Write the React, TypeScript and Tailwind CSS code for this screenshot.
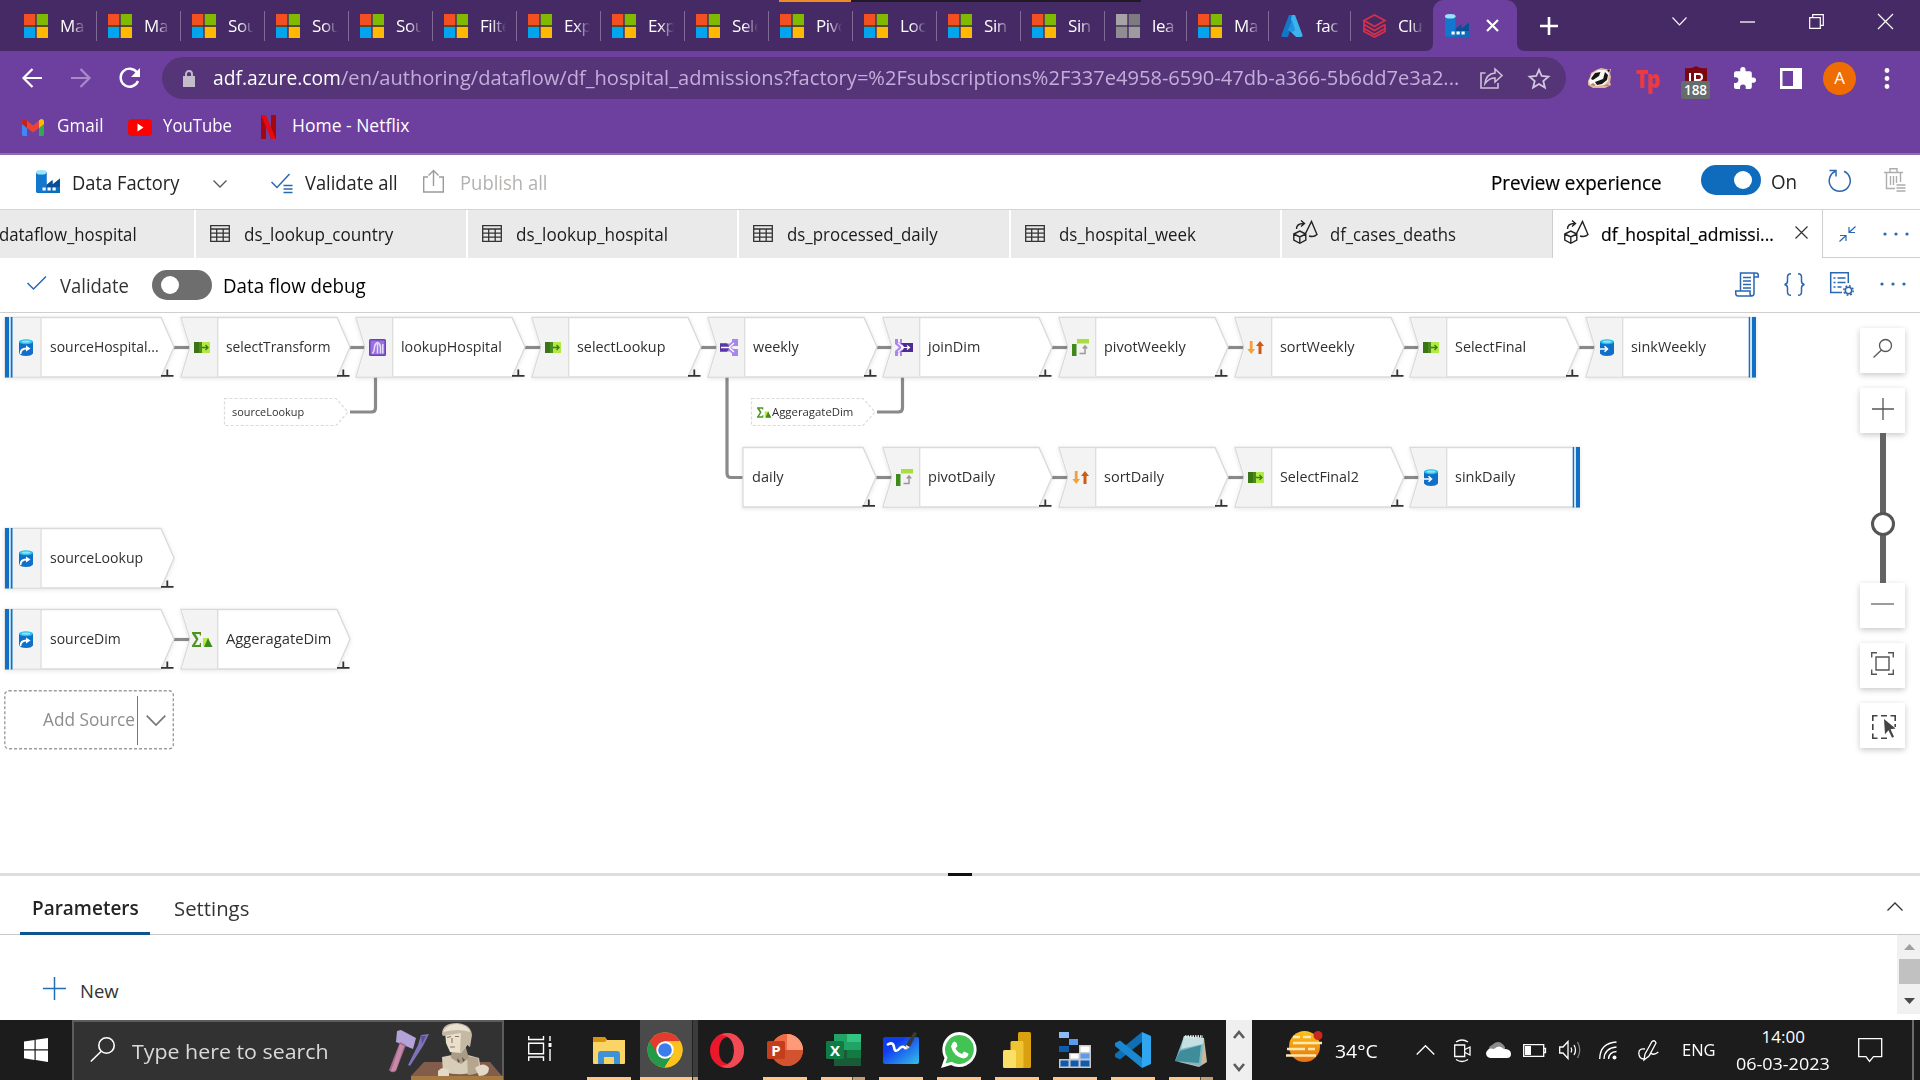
import { useLayoutEffect, useRef, useState, type ReactNode } from "react";

/* Text run squeezed or stretched to an exact advance width. */
function T({ w, className = "", children }: { w: number; className?: string; children: ReactNode }) {
  const ref = useRef<HTMLSpanElement>(null);
  const [k, setK] = useState(1);
  useLayoutEffect(() => {
    if (ref.current) setK(w / ref.current.offsetWidth);
  }, [w]);
  return (
    <span className={"block shrink-0 whitespace-nowrap " + className} style={{ width: w }}>
      <span ref={ref} className="inline-block origin-left" style={{ transform: `scaleX(${k})` }}>
        {children}
      </span>
    </span>
  );
}

function Svg({ w, h, vb, className = "", children }: { w: number; h: number; vb?: string; className?: string; children: ReactNode }) {
  return (
    <svg width={w} height={h} viewBox={vb ?? `0 0 ${w} ${h}`} className={"block shrink-0 overflow-visible " + className} fill="none">
      {children}
    </svg>
  );
}

/* ---------- browser chrome ---------- */

function MsLogo({ grey }: { grey?: boolean }) {
  const c = grey ? ["#a5a3a6", "#7d7b7e", "#8f8d90", "#9d9b9e"] : ["#f25022", "#7fba00", "#00a4ef", "#ffb900"];
  return (
    <Svg w={24} h={24}>
      <path d="M0 0h24v24H0z" fill={grey ? "#5a4d68" : "#5c4a28"} />
      <path d="M11 0h2v24h-2z" fill="#462a65" />
      <path d="M0 0h11.3v11H0z" fill={c[0]} />
      <path d="M12.7 0H24v11H12.7z" fill={c[1]} />
      <path d="M0 13h11.3v11H0z" fill={c[2]} />
      <path d="M12.7 13H24v11H12.7z" fill={c[3]} />
    </Svg>
  );
}

function FactoryIcon({ w = 24, h = 24 }: { w?: number; h?: number }) {
  return (
    <Svg w={w} h={h} vb="0 0 24 24">
      <path d="M0 2h10.500v13l6-5v4.500l7.500-6V23H1.500L0 22z" fill="#0f6cbd" />
      <path d="M10.500 15l6-5v4.500l7.500-6V17H10.500z" fill="#0a4f96" />
      <path d="M0 2h10.500v20.500H1L0 22z" fill="#1277cf" />
      <ellipse cx="5.250" cy="2.300" rx="5.250" ry="2.300" fill="#9be4f8" />
      <path d="M6.500 17.500h3.200v3H6.500zM11.500 17.500h3.200v3h-3.200zM16.500 17.500h3.200v3h-3.200z" fill="#fff" />
    </Svg>
  );
}

function AzureIcon() {
  return (
    <Svg w={22} h={22}>
      <path d="M8 0h6L7 22H1.500Q0 22 .5 20z" fill="#1377c8" />
      <path d="M14 0l7.500 20q.4 2-1.500 2h-5L7 14h6L10 4l1-4z" fill="#3cb3ee" />
      <path d="M11 5l-3.500 9 4 3 2.500-2z" fill="#2390dd" />
    </Svg>
  );
}

function DatabricksIcon() {
  return (
    <Svg w={23} h={24}>
      <path
        d="M1 6.500L11.500 1 22 6.500 11.500 12.500zM1 6.500v4l10.500 6 10.500-6M1 10.500v4l10.500 6 10.500-6v-4M1 14.500v3l10.500 5.500L22 17.500v-3"
        stroke="#d6304a"
        strokeWidth="1.700"
      />
    </Svg>
  );
}

const msTabs = ["Ma", "Ma", "Sou", "Sou", "Sou", "Filte", "Exp", "Exp", "Sele", "Pivo", "Loc", "Sin", "Sin"];

function BrowserTab({ icon, label, narrow, last }: { icon: ReactNode; label: string; narrow?: boolean; last?: boolean }) {
  return (
    <div
      className={
        (narrow ? "w-[82px]" : "w-[84px]") + (last ? "" : " border-r") + " flex h-[30px] shrink-0 items-center border-[#7f6a96] pl-[11px]"
      }
    >
      <div className="flex w-6 justify-center">{icon}</div>
      <div className="ml-3 w-[26px] overflow-hidden whitespace-nowrap text-[17px] leading-[26px] tracking-[-0.4px] text-white [mask-image:linear-gradient(to_right,black_45%,transparent)]">
        {label}
      </div>
    </div>
  );
}

function TabStrip() {
  return (
    <div className="relative flex h-[51px] shrink-0 items-center bg-[#462a65] pl-[13px]">
      <div className="absolute left-[779px] top-0 flex h-[2px] w-[362px] bg-[#1f1a26]">
        <div className="w-[72px] bg-[#f08a24]" />
      </div>
      {msTabs.map((t, i) => (
        <BrowserTab key={i} icon={<MsLogo />} label={t} />
      ))}
      <BrowserTab icon={<MsLogo grey />} label="lea" narrow />
      <BrowserTab icon={<MsLogo />} label="Ma" narrow />
      <BrowserTab icon={<AzureIcon />} label="fac" narrow />
      <BrowserTab icon={<DatabricksIcon />} label="Clus" narrow last />
      <div className="relative flex h-[51px] w-[84px] shrink-0 items-center rounded-t-[11px] bg-[#6d409f] pl-3">
        <Svg w={8} h={8} className="absolute -left-2 bottom-0">
          <path d="M8 0v8H0q8 0 8-8z" fill="#6d409f" />
        </Svg>
        <Svg w={8} h={8} className="absolute -right-2 bottom-0">
          <path d="M0 0v8h8Q0 8 0 0z" fill="#6d409f" />
        </Svg>
        <FactoryIcon />
        <Svg w={13} h={13} className="ml-[17px]">
          <path d="M1 1l11 11M12 1L1 12" stroke="#fff" strokeWidth="2.200" />
        </Svg>
      </div>
      <Svg w={18} h={18} className="ml-[23px]">
        <path d="M9 0v18M0 9h18" stroke="#fff" strokeWidth="2.600" />
      </Svg>
      <Svg w={15} h={9} className="mb-2 ml-[114px]">
        <path d="M.5.5l7 7.500 7-7.500" stroke="#fff" strokeWidth="1.100" />
      </Svg>
      <Svg w={15} h={2} className="mb-2 ml-[53px]">
        <path d="M0 1h15" stroke="#fff" strokeWidth="1.300" />
      </Svg>
      <Svg w={15} h={15} className="mb-2 ml-[54px]">
        <path d="M.7 3.700h10.600v10.600H.7zM3.700 3.500V.7h10.600v10.600h-2.600" stroke="#fff" strokeWidth="1.200" />
      </Svg>
      <Svg w={15} h={15} className="mb-2 ml-[54px]">
        <path d="M0 0l15 15M15 0L0 15" stroke="#fff" strokeWidth="1.200" />
      </Svg>
    </div>
  );
}

function AddressBar() {
  return (
    <div className="flex h-[54px] items-center pl-[22px]">
      <Svg w={20} h={20}>
        <path d="M20 10H2M10.500 1L1.500 10l9 9" stroke="#fff" strokeWidth="2.200" />
      </Svg>
      <Svg w={20} h={20} className="ml-[29px]">
        <path d="M0 10h18M9.500 1l9 9-9 9" stroke="#a98bc9" strokeWidth="2.200" />
      </Svg>
      <Svg w={21} h={20} className="ml-7">
        <path d="M18 4.500A9 9 0 1 0 19 13" stroke="#fff" strokeWidth="2.400" />
        <path d="M21 0v9h-9z" fill="#fff" />
      </Svg>
      <div className="ml-[22px] flex h-[42px] w-[1404px] shrink-0 items-center rounded-full bg-[#553577] pl-[21px] text-[20px]">
        <Svg w={12} h={17} className="mr-[18px]">
          <path d="M0 6h12v11H0z" fill="#c3bccb" />
          <path d="M3 7V4a3 3 0 0 1 6 0v3" stroke="#c3bccb" strokeWidth="1.900" />
        </Svg>
        <T w={128} className="text-white">adf.azure.com</T>
        <T w={1118} className="text-[#c4addb]">
          /en/authoring/dataflow/df_hospital_admissions?factory=%2Fsubscriptions%2F337e4958-6590-47db-a366-5b6dd7e3a2...
        </T>
        <Svg w={23} h={21} className="ml-[21px]">
          <path d="M5.500 5H1v15h17v-5" stroke="#cdc2d8" strokeWidth="1.600" />
          <path d="M15 1l7 6.500-7 6.500v-4q-6 0-10 5.500Q6 6 15 5z" stroke="#cdc2d8" strokeWidth="1.600" />
        </Svg>
        <Svg w={22} h={21} className="ml-[25px]">
          <path d="M11 1.800l2.700 6.200 6.700.6-5.100 4.400 1.600 6.600L11 16.100l-5.900 3.500 1.600-6.600L1.600 8.600 8.300 8z" stroke="#d3c6e0" strokeWidth="1.800" />
        </Svg>
      </div>
      <Svg w={25} h={20} className="ml-[21px]">
        <path d="M1 13l2-4 1-4 5-3 5-2 5 1 5 0-1 4 1 4-1 5 1 3-6 3H6l-5-3z" fill="#e3b79c" />
        <path d="M2 13l3-7 6-4 7 0 4 3-1 8-4 4-9 1-5-1z" fill="#fbf8f4" />
        <path d="M2 13.500l2-2.500 2 1 6-4 1.500-4L8 5l-3 4-1 2zM8 14l8-3 2-7 3 3-1 5-5 4-5 1zM20 1.500l3 0-1 3z" fill="#161616" />
        <path d="M14.500 10l2-1-.5 1.500z" fill="#eee" />
        <path d="M3 17l3-2 3 2-2 1zM16 18l5-2 1 2z" fill="#b98668" />
      </Svg>
      <div className="ml-[24px] w-6 shrink-0 text-[25px] font-extrabold leading-[24px] tracking-[-2px] text-[#ee3a3f]">
        <T w={23}>Tp</T>
      </div>
      <div className="relative ml-[21px] h-[42px] w-[29px] shrink-0">
        <Svg w={22} h={20} className="absolute left-[4px] top-[9px]">
          <path d="M0 2q7 1 11-2 4 3 11 2v18H0z" fill="#7d0710" />
          <path d="M5 7v9M10 16V8h4a3 3 0 0 1 0 6h-3" stroke="#fff" strokeWidth="2" />
        </Svg>
        <div className="absolute left-0 top-6 flex h-[18px] w-[29px] items-center justify-center rounded-[2px] bg-[#666b6c] text-[13.500px] font-semibold text-white">
          188
        </div>
      </div>
      <Svg w={22} h={22} vb="2 1 21 21" className="ml-6">
        <path d="M20.500 11H19V7a2 2 0 0 0-2-2h-4V3.500a2.500 2.500 0 0 0-5 0V5H4a2 2 0 0 0-2 2v3.800h1.500a2.700 2.700 0 0 1 0 5.400H2V20a2 2 0 0 0 2 2h3.800v-1.500a2.700 2.700 0 0 1 5.400 0V22H17a2 2 0 0 0 2-2v-4h1.500a2.500 2.500 0 0 0 0-5z" fill="#fff" />
      </Svg>
      <Svg w={22} h={21} className="ml-[24px]">
        <path d="M0 0h22v21H0zM2.500 3v15H13V3z" fill="#fff" fillRule="evenodd" />
      </Svg>
      <div className="ml-[21px] flex size-[33px] shrink-0 items-center justify-center rounded-full bg-[#ef6c00] text-[17px] text-white">A</div>
      <Svg w={6} h={21} className="ml-7">
        <circle cx="3" cy="2.500" r="2.400" fill="#fff" />
        <circle cx="3" cy="10.500" r="2.400" fill="#fff" />
        <circle cx="3" cy="18.500" r="2.400" fill="#fff" />
      </Svg>
    </div>
  );
}

function Bookmarks() {
  return (
    <div className="flex h-10 items-center pl-[22px] text-[17.500px] text-white">
      <Svg w={22} h={17} className="mt-1">
        <path d="M0 3v12.500Q0 17 1.500 17H5V7z" fill="#4285f4" />
        <path d="M22 3v12.500q0 1.500-1.500 1.500H17V7z" fill="#34a853" />
        <path d="M0 3q0-3 3-3l8 6.500L19 0l-2 9-6 4.500L5 9z" fill="#ea4335" />
        <path d="M0 3q0-3 3-3l2 1.500V9L0 5z" fill="#c5221f" />
        <path d="M22 3q0-3-3-3l-2 1.500V9l5-4z" fill="#fbbc04" />
      </Svg>
      <T w={46} className="ml-[13px]">Gmail</T>
      <Svg w={24} h={17} className="ml-[25px] mt-1">
        <rect width="24" height="17" rx="4" fill="#fe0000" />
        <path d="M9.500 4.500l6 4-6 4z" fill="#fff" />
      </Svg>
      <T w={69} className="ml-[11px]">YouTube</T>
      <Svg w={15} h={24} className="ml-[29px] mt-1">
        <path d="M0 0h5v24H0zM10 0h5v24h-5z" fill="#a30710" />
        <path d="M0 0h5l10 24h-5z" fill="#e50914" />
      </Svg>
      <T w={117} className="ml-4">Home - Netflix</T>
    </div>
  );
}

/* ---------- Data Factory header ---------- */

const blue = "#2b66b1";

function Toggle({ on }: { on?: boolean }) {
  return (
    <div className={(on ? "justify-end bg-[#0f6cbd] pr-[9px]" : "justify-start bg-[#6e6e6e] pl-[9px]") + " flex h-[30px] w-[60px] shrink-0 items-center rounded-full"}>
      <div className="size-[18px] rounded-full bg-white" />
    </div>
  );
}

function FactoryBar() {
  return (
    <div className="flex h-[55px] shrink-0 items-center border-b border-[#d4d4d4] pl-9 text-[19.500px] text-[#242424]">
      <FactoryIcon />
      <T w={108} className="ml-3 mt-px">Data Factory</T>
      <Svg w={14} h={8} className="ml-[33px] mt-1">
        <path d="M.5.500l6.500 6.500 6.500-6.500" stroke="#555" strokeWidth="1.300" />
      </Svg>
      <Svg w={22} h={21} className="ml-11 mt-0.5">
        <path d="M.5 9l5.500 5.500L18.500 1" stroke={blue} strokeWidth="1.500" />
        <path d="M12.500 12.500h9M12.500 16h9M12.500 19.500h9" stroke={blue} strokeWidth="1.500" />
      </Svg>
      <T w={93} className="ml-[12px] mt-0.5">Validate all</T>
      <Svg w={21} h={24} className="-mt-0.5 ml-[25px]">
        <path d="M5 8H.7v15h19.600V8H16M10.500 17V1.500M5.500 6.500l5-5 5 5" stroke="#9b9b9b" strokeWidth="1.400" />
      </Svg>
      <T w={87} className="ml-4 mt-0.5 text-[#b4b2b0]">Publish all</T>
      <T w={171} className="ml-[944px] mt-px text-black [-webkit-text-stroke:0.200px_black]">Preview experience</T>
      <div className="-mt-1 ml-[39px]">
        <Toggle on />
      </div>
      <T w={26} className="ml-[10px]">On</T>
      <Svg w={24} h={24} className="-mt-1 ml-[31px]">
        <path d="M7.500 3.200A10.500 10.500 0 1 0 16 3.200" stroke={blue} strokeWidth="1.500" />
        <path d="M1.500 2.500h6.500v6" stroke={blue} strokeWidth="1.500" />
      </Svg>
      <Svg w={22} h={24} className="-mt-1 ml-8">
        <path d="M0 4.500h19M6 4V.8h7V4M2.500 4.500V20.500H11M16.500 4.500V14M6.500 8v9M9.500 8v9M12.500 8v7M12.500 17h9M12.500 20h9M12.500 23h9" stroke="#adadad" strokeWidth="1.400" />
      </Svg>
    </div>
  );
}

function TableIcon() {
  return (
    <Svg w={20} h={17}>
      <path d="M.7.7h18.600v15.600H.7zM.7 4h18.600M.7 8.200h18.600M.7 12.200h18.600M6.700 4v12.300M13.200 4v12.300" stroke="#333" strokeWidth="1.300" />
    </Svg>
  );
}

function FlowIcon() {
  return (
    <Svg w={25} h={24}>
      <path d="M.8 14l6-3 6 3v6l-6 3.300-6-3.300zM.8 14l6 3 6-3M6.800 17v6" stroke="#222" strokeWidth="1.400" />
      <path d="M12 14.500L18.500 1.500l5.500 13q-3 3-8 1.500" stroke="#222" strokeWidth="1.400" />
      <path d="M3.500 9q0-5.500 7-5.500M8 .5l3.500 3L8 6.500" stroke="#222" strokeWidth="1.400" />
    </Svg>
  );
}

const docTabs: { label: string; w: number; flow?: boolean }[] = [
  { label: "ds_lookup_country", w: 149 },
  { label: "ds_lookup_hospital", w: 152 },
  { label: "ds_processed_daily", w: 151 },
  { label: "ds_hospital_week", w: 137 },
  { label: "df_cases_deaths", w: 126, flow: true },
];

function Dots() {
  return (
    <Svg w={26} h={4}>
      <circle cx="2" cy="2" r="1.600" fill={blue} />
      <circle cx="13" cy="2" r="1.600" fill={blue} />
      <circle cx="24" cy="2" r="1.600" fill={blue} />
    </Svg>
  );
}

function DocTabs() {
  return (
    <div className="flex h-12 shrink-0 text-[18px] text-[#1b1b1b]">
      <div className="flex w-[194px] shrink-0 items-center bg-[#eaeaea]">
        <T w={138} className="-ml-px">dataflow_hospital</T>
      </div>
      {docTabs.map((t) => (
        <div key={t.label} className="flex w-[271.500px] shrink-0 items-center border-l-2 border-white bg-[#eaeaea]">
          <div className={t.flow ? "-mt-1 ml-[11px]" : "-mt-0.5 ml-[14px]"}>{t.flow ? <FlowIcon /> : <TableIcon />}</div>
          <T w={t.w} className={t.flow ? "ml-3" : "ml-[14px]"}>{t.label}</T>
        </div>
      ))}
      <div className="flex w-[271.500px] shrink-0 items-center border-x border-[#cfcfcf]">
        <div className="-mt-1 ml-[11px]">
          <FlowIcon />
        </div>
        <T w={173} className="ml-3 text-black [-webkit-text-stroke:0.200px_black]">df_hospital_admissi...</T>
        <Svg w={13} h={13} className="-mt-1 ml-[21px]">
          <path d="M.5.500l12 12M12.500.500l-12 12" stroke="#333" strokeWidth="1.200" />
        </Svg>
      </div>
      <div className="flex grow items-center border-b border-[#cfcfcf] pl-4">
        <Svg w={17} h={16} className="mr-[27px]">
          <path d="M16.500.500L10 6.500M10 1v5.500h6M.500 15.500l6.500-6M1 9.500h6V15" stroke={blue} strokeWidth="1.200" />
        </Svg>
        <Dots />
      </div>
    </div>
  );
}

function FlowToolbar() {
  return (
    <div className="flex h-[55px] shrink-0 items-center border-b border-[#cfcfcf] pl-[27px] text-[19.500px] text-[#333]">
      <Svg w={20} h={14} className="-mt-1">
        <path d="M.5 7l6 6L19 .5" stroke={blue} strokeWidth="1.500" />
      </Svg>
      <T w={69} className="ml-[13px] mt-0.5">Validate</T>
      <div className="ml-[23px]">
        <Toggle />
      </div>
      <T w={143} className="ml-[11px] mt-0.5 text-black">Data flow debug</T>
      <Svg w={24} h={25} className="-mt-0.5 ml-[1369px]">
        <path d="M5.500 19V1H21q2.300 0 2.300 2.500V5H19M19 1.500V21q0 3-2.500 3H3Q.7 24 .7 21v-2H15v2q0 3 2 3" stroke={blue} strokeWidth="1.500" />
        <path d="M8 5.500h8M8 9h8M8 12.500h8M8 16h8" stroke={blue} strokeWidth="1.500" />
      </Svg>
      <Svg w={21} h={23} className="-mt-0.5 ml-[25px]">
        <path d="M7 .7Q3.500.7 3.500 4v4q0 3-3 3.500 3 .5 3 3.500v4q0 3.300 3.500 3.300M14 .7q3.500 0 3.500 3.300v4q0 3 3 3.500-3 .5-3 3.500v4q0 3.300-3.500 3.300" stroke={blue} strokeWidth="1.500" />
      </Svg>
      <Svg w={24} h={24} className="-mt-0.5 ml-[25px]">
        <path d="M12 20.500H.700V.700h17.600V11M3.500 6h2M7.500 6h8M3.500 10.500h2M7.500 10.500h8M3.500 15h2M7.500 15h4" stroke={blue} strokeWidth="1.500" />
        <circle cx="18.500" cy="18.500" r="3.200" stroke={blue} strokeWidth="1.500" />
        <circle cx="18.500" cy="18.500" r="4.700" stroke={blue} strokeWidth="1.500" strokeDasharray="1.800 1.890" />
      </Svg>
      <div className="-mt-0.5 ml-[26px]">
        <Dots />
      </div>
    </div>
  );
}

/* ---------- data flow canvas ---------- */

type Kind = "source" | "select" | "lookup" | "split" | "join" | "pivot" | "sort" | "sink" | "agg";

function KindIcon({ kind }: { kind: Kind }) {
  switch (kind) {
    case "source":
    case "sink":
      return (
        <Svg w={14} h={17}>
          <path d="M0 2.500h14v12q-2 2.500-7 2.500t-7-2.500z" fill="#0f6fc9" />
          <ellipse cx="7" cy="2.800" rx="7" ry="2.500" fill="#2cc0ea" />
          <ellipse cx="7" cy="2.600" rx="4.500" ry="1.200" fill="#8ae6fb" />
          {kind === "source" ? (
            <>
              <path d="M1.500 15q0-5.500 6-5.500" stroke="#fff" strokeWidth="1.800" />
              <path d="M7 6.500L11.500 9.500 7 12.500z" fill="#fff" />
            </>
          ) : (
            <path d="M0 10h7M4.500 7.200l3 2.800-3 2.800" stroke="#fff" strokeWidth="1.500" />
          )}
        </Svg>
      );
    case "select":
      return (
        <Svg w={16} h={11}>
          <path d="M0 0h9v11H0z" fill="#4a8b1d" />
          <path d="M0 0h5v11H0z" fill="#3a7414" />
          <path d="M8 0h8v11H8z" fill="#b2ea45" />
          <path d="M8 5.500h6M11.500 3L14 5.500 11.500 8" stroke="#3f7d14" strokeWidth="1.400" />
        </Svg>
      );
    case "lookup":
      return (
        <Svg w={17} h={17}>
          <rect width="17" height="17" rx="1.500" fill="#6a42b8" />
          <rect x="1.500" y="1.500" width="14" height="14" fill="#9a70e2" />
          <path d="M3.500 14.500Q5.500 12 5.500 8.500q0-3.500 3-5 3 1.500 3 5v6" stroke="#e8dcfb" strokeWidth="1.500" />
          <path d="M8.500 14.500V5M13.800 14.500V5" stroke="#e8dcfb" strokeWidth="1.500" />
        </Svg>
      );
    case "split":
      return (
        <Svg w={18} h={17}>
          <path d="M0 4.500h7l4 4-4 4H0z" fill="#4c2c91" />
          <path d="M6 4.500h4l2-2V0h6v7h-4.500l-2.500 1.500 2.500 1.500H18v7h-6v-2.500l-2-2H6z" fill="#a986ec" />
          <path d="M0 4.500h7l3 4-3 4H0z" fill="#5a35a3" />
          <path d="M1 8.500h8l5-4.500M9 8.500l5 4.500" stroke="#fff" strokeWidth="1.300" />
        </Svg>
      );
    case "join":
      return (
        <Svg w={18} h={17}>
          <path d="M0 0h3v3l4 2-1 3.500L7 12l-4 2v3H0v-5l4-3.500L0 5z" fill="#a986ec" />
          <path d="M6 0v5M6 17v-5" stroke="#a986ec" strokeWidth="2" />
          <path d="M6 4h12v9H6l3.500-4.500z" fill="#4c2c91" />
          <path d="M3 4l5 4.500L3 13M8 8.500h6M12 6.500l2.500 2-2.500 2" stroke="#fff" strokeWidth="1.200" />
        </Svg>
      );
    case "pivot":
      return (
        <Svg w={17} h={17}>
          <path d="M5 0h12v4.500H5z" fill="#a8df3e" />
          <path d="M0 5h4.500v12H0z" fill="#3f8a1c" />
          <path d="M7.500 14.500H13V7.500M10.800 9.500L13 7l2.200 2.500" stroke="#999" strokeWidth="1.500" />
        </Svg>
      );
    case "sort":
      return (
        <Svg w={17} h={13}>
          <path d="M2.800 0h2.800v8H8l-3.800 5L.4 8h2.400z" fill="#f2a13a" />
          <path d="M11.500 13h3V5H17L13 0 9 5h2.500z" fill="#cf5a11" />
        </Svg>
      );
    case "agg":
      return (
        <Svg w={20} h={15}>
          <path d="M0 0h9v3.500H8L7.500 2H3.500l3 5-3.500 6h4.500L8 11h1v4H0v-1.500L4 7.500 0 1.500z" fill="#4f9422" />
          <path d="M11 6h6v8h-6z" fill="#b2ea45" />
          <path d="M16 6l4.500 9H12z" fill="#3f8a1c" />
        </Svg>
      );
  }
}

function FlowNode({ x, y, label, w, kind }: { x: number; y: number; label: string; w: number; kind?: Kind }) {
  const source = kind === "source";
  const sink = kind === "sink";
  const bare = !kind;
  const right = bare ? 119.5 : 156;
  const body = sink
    ? "M0 .5H169V60H0L9 30z"
    : source
      ? "M0 .5H156L169 30 156 60H0z"
      : bare
        ? "M0 .5H120L133 30 120 60H0z"
        : "M0 .5H156L169 30 156 60H0L9 30z";
  const tx = source ? 45 : bare ? 9 : 45;
  return (
    <div className="absolute h-[60px] w-[170px]" style={{ left: x, top: y }}>
      <Svg w={176} h={60} className="absolute left-0 top-0 drop-shadow-[0_1px_2px_rgba(0,0,0,0.1)]">
        <path d={body} fill="#fff" stroke="#dadada" strokeWidth="1.300" />
        {!bare && <path d={source ? "M7 1h28.500v58.500H7z" : "M.800 1h35.700v58.500H.800L10 30z"} fill="#f3f3f3" />}
        {!bare && <path d={source ? "M36 1v58.500" : "M36.700 1v58.500"} stroke="#dcdcdc" strokeWidth="1.300" />}
        {source && <path d="M0 0h4v60.500H0zM5.500 0h2v60.500h-2z" fill="#1170c4" />}
        {source && <path d="M4 0h1.500v60.500H4z" fill="#cfe6f8" />}
        {sink && <path d="M162.700 0h1.600v60.500h-1.600zM166 0h4v60.500h-4z" fill="#1170c4" />}
        {sink && <path d="M164.300 0h1.700v60.500h-1.700z" fill="#cfe6f8" />}
        {!sink && <path d={`M${right} 58.800h12.500M${right + 6.3} 58V52.500`} stroke="#333" strokeWidth="1.800" />}
      </Svg>
      {kind && (
        <div className="absolute left-[9px] top-0 flex h-[60px] w-6 items-center justify-center">
          <KindIcon kind={kind} />
        </div>
      )}
      <div className="absolute top-0 flex h-[59px] items-center text-[15px] font-medium text-[#303030]" style={{ left: tx }}>
        <T w={w}>{label}</T>
      </div>
    </div>
  );
}

function RefNode({ x, y, label, w, agg }: { x: number; y: number; label: string; w: number; agg?: boolean }) {
  return (
    <div className="absolute flex h-7 w-[126px] items-center text-[11.500px] font-medium text-[#303030]" style={{ left: x, top: y }}>
      <Svg w={126} h={28} className="absolute left-0 top-0">
        <path d="M.500.500H112L124 14 112 27.500H.500z" fill="#fff" stroke="#dadada" strokeWidth="1.200" strokeDasharray="3 2" />
      </Svg>
      {agg && (
        <Svg w={14} h={11} vb="0 0 20 15" className="relative ml-[6px] mr-px">
          <path d="M0 0h9v3.500H8L7.500 2H3.500l3 5-3.500 6h4.500L8 11h1v4H0v-1.500L4 7.500 0 1.500z" fill="#4f9422" />
          <path d="M11 6h6v8h-6z" fill="#b2ea45" />
          <path d="M16 6l4.500 9H12z" fill="#3f8a1c" />
        </Svg>
      )}
      <T w={w} className={agg ? "relative -mt-px" : "relative -mt-px ml-[8px]"}>{label}</T>
    </div>
  );
}

const P = 175.7;
const nodes: { x: number; y: number; label: string; w: number; kind?: Kind }[] = [
  { x: 5, y: 4, label: "sourceHospital...", w: 109, kind: "source" },
  { x: 180.5, y: 4, label: "selectTransform", w: 104, kind: "select" },
  { x: 180.5 + P, y: 4, label: "lookupHospital", w: 101, kind: "lookup" },
  { x: 180.5 + 2 * P, y: 4, label: "selectLookup", w: 88, kind: "select" },
  { x: 180.5 + 3 * P, y: 4, label: "weekly", w: 46, kind: "split" },
  { x: 180.5 + 4 * P, y: 4, label: "joinDim", w: 52, kind: "join" },
  { x: 180.5 + 5 * P, y: 4, label: "pivotWeekly", w: 82, kind: "pivot" },
  { x: 180.5 + 6 * P, y: 4, label: "sortWeekly", w: 75, kind: "sort" },
  { x: 180.5 + 7 * P, y: 4, label: "SelectFinal", w: 71, kind: "select" },
  { x: 180.5 + 8 * P, y: 4, label: "sinkWeekly", w: 75, kind: "sink" },
  { x: 743, y: 134, label: "daily", w: 32 },
  { x: 180.5 + 4 * P, y: 134, label: "pivotDaily", w: 67, kind: "pivot" },
  { x: 180.5 + 5 * P, y: 134, label: "sortDaily", w: 60, kind: "sort" },
  { x: 180.5 + 6 * P, y: 134, label: "SelectFinal2", w: 79, kind: "select" },
  { x: 180.5 + 7 * P, y: 134, label: "sinkDaily", w: 60, kind: "sink" },
  { x: 5, y: 215, label: "sourceLookup", w: 93, kind: "source" },
  { x: 5, y: 296, label: "sourceDim", w: 71, kind: "source" },
  { x: 180.5, y: 296, label: "AggeragateDim", w: 105, kind: "agg" },
];

const links = [
  ...Array.from({ length: 9 }, (_, i) => `M${173.5 + i * P} 34.500h17`),
  ...Array.from({ length: 4 }, (_, i) => `M${173.5 + (i + 4) * P} 164.500h17`),
  "M173.500 326.500h17",
  "M375.500 64v31q0 4-4 4H350",
  "M902.500 64v31q0 4-4 4H877",
  "M727 64v96q0 4.500 4 4.500h12",
];

function ToolButton({ children, className = "" }: { children: ReactNode; className?: string }) {
  return (
    <div className={"flex size-[45px] shrink-0 items-center justify-center bg-white shadow-[0_2px_6px_rgba(0,0,0,0.220)] " + className}>{children}</div>
  );
}

function Canvas() {
  return (
    <div className="relative h-[560px] shrink-0 overflow-hidden bg-white">
      <Svg w={1800} h={560} className="absolute left-0 top-0">
        {links.map((d, i) => (
          <path key={i} d={d} stroke="#8a8a8a" strokeWidth="3.200" />
        ))}
      </Svg>
      {nodes.map((n, i) => (
        <FlowNode key={i} {...n} />
      ))}
      <RefNode x={224} y={85} label="sourceLookup" w={72} />
      <RefNode x={751} y={85} label="AggeragateDim" w={81} agg />
      <div className="absolute left-[4px] top-[377px] flex h-[60px] w-[170px] items-center text-[18px] text-[#8d8d8d]">
        <Svg w={170} h={60} className="absolute left-0 top-0">
          <rect x=".8" y=".8" width="168.500" height="58" rx="4" stroke="#9c9c9c" strokeWidth="1.400" strokeDasharray="3 2" />
        </Svg>
        <T w={92} className="-mt-px ml-[39px]">Add Source</T>
        <div className="ml-[2px] h-[49px] w-px bg-[#777]" />
        <Svg w={20} h={11} className="ml-2 mt-px">
          <path d="M.7.700l9.300 9.300 9.300-9.300" stroke="#777" strokeWidth="1.700" />
        </Svg>
      </div>
      <div className="absolute left-[1860px] top-[15px] flex flex-col items-center">
        <ToolButton>
          <Svg w={19} h={19} className="mb-1">
            <circle cx="12.500" cy="6.500" r="6" stroke="#555" strokeWidth="1.300" />
            <path d="M8.500 11L.5 18.500" stroke="#555" strokeWidth="1.300" />
          </Svg>
        </ToolButton>
        <ToolButton className="mt-[15px]">
          <Svg w={22} h={22} className="mb-1">
            <path d="M11 0v22M0 11h22" stroke="#555" strokeWidth="1.300" />
          </Svg>
        </ToolButton>
        <div className="relative ml-px h-[150px] w-[6px] bg-[#636363]">
          <div className="absolute -left-[9px] top-[79px] size-6 rounded-full border-[3px] border-[#555] bg-white" />
        </div>
        <ToolButton>
          <Svg w={23} h={2} className="mb-1">
            <path d="M0 1h23" stroke="#666" strokeWidth="1.300" />
          </Svg>
        </ToolButton>
        <ToolButton className="mt-[15px]">
          <Svg w={23} h={23} className="mb-1">
            <path d="M5 5h13v13H5zM.700 5.500V.700H6M17 .700h5.300V5.500M.700 17.500v4.800H6M17 22.300h5.300v-4.800" stroke="#555" strokeWidth="1.400" />
          </Svg>
        </ToolButton>
        <ToolButton className="mt-[15px]">
          <Svg w={24} h={24} className="ml-[3px] mt-0.5">
            <path d="M.800 6V.800H5.500M9 .800h6M18.500.800h4.700V6M.800 9v6M.800 18.500v4.700H5.500M9 23.200h6M23.200 9v3" stroke="#444" strokeWidth="1.600" />
            <path d="M12 4l11.500 9.500-5 .8 3.500 7.500-2 .9-3.500-7.500-3.500 4z" fill="#444" />
          </Svg>
        </ToolButton>
      </div>
    </div>
  );
}

/* ---------- bottom panel ---------- */

function Panel() {
  return (
    <div className="h-[147px] shrink-0 bg-white">
      <div className="flex h-[3px] justify-center bg-[#dedede]">
        <div className="h-[3px] w-6 bg-[#111]" />
      </div>
      <div className="flex h-[59px] items-center border-b border-[#c9c9c9] pl-5 text-[19.500px] text-[#333]">
        <div className="flex h-[59px] w-[130px] shrink-0 items-center border-b-[3px] border-[#0f548c] pl-3 pt-[9px] font-semibold text-[#242424]">
          <T w={107}>Parameters</T>
        </div>
        <T w={75} className="ml-6 mt-[7px]">Settings</T>
        <Svg w={16} h={9} className="ml-[1638px] mt-[2px]">
          <path d="M.5 8.500L8 1l7.500 7.500" stroke="#333" strokeWidth="1.300" />
        </Svg>
      </div>
      <div className="flex h-[85px]">
        <div className="flex grow items-start pl-[43px] pt-[42px] text-[18.500px] text-[#333]">
          <Svg w={23} h={23}>
            <path d="M11.500 0v23M0 11.500h23" stroke="#1f6fb8" strokeWidth="1.500" />
          </Svg>
          <T w={39} className="ml-[14px]">New</T>
        </div>
        <div className="flex h-[79px] w-[23px] flex-col items-center bg-[#f1f1f1]">
          <Svg w={11} h={6} className="ml-px mt-[9px]">
            <path d="M0 6L5.500 0 11 6z" fill="#a0a0a0" />
          </Svg>
          <div className="ml-0.5 mt-[9px] h-[25px] w-[21px] bg-[#c1c1c1]" />
          <Svg w={11} h={6} className="ml-px mt-[14px]">
            <path d="M0 0l5.500 6L11 0z" fill="#4a4a4a" />
          </Svg>
        </div>
      </div>
    </div>
  );
}

/* ---------- taskbar ---------- */

function SculptureArt() {
  return (
    <Svg w={116} h={57}>
      <path d="M10 8l4-1 15 8-3 11-17-7z" fill="#b4a3d8" />
      <path d="M13 19l6 3-10 26q-4 3-7-1z" fill="#a8688c" />
      <path d="M17 23L9 47q-3 2-5 1l9-27z" fill="#c58aa8" />
      <path d="M34 12l8-1-6 12L23 43l-2-1 10-20z" fill="#7f72b8" />
      <path d="M34 13l5 0-4 8z" fill="#5c4f98" />
      <path d="M37 39h66l12 14H24z" fill="#835d4c" />
      <path d="M24 53h92v4H24z" fill="#a77a42" />
      <path d="M55 34l10-2h16l11 3 2 13q-18 6-38 1z" fill="#d8cdb9" />
      <path d="M80 33l11 2 2 14q-7 3-12 3z" fill="#b5a78f" />
      <path d="M65 22h13l4 13-8 6-10-6z" fill="#a99b85" />
      <path d="M58 8l21-1 2 14-7 9-11-1-4-9z" fill="#eadfcb" />
      <path d="M74 9l6-1q3 10-1 16l-6 6z" fill="#c6b9a3" />
      <path d="M55 11Q55 0 70 0q14 1 15 12l-2 12q-4-2-5-8l-4-6-18 3z" fill="#c6b9a3" />
      <path d="M56 9Q60 1 70 1q11 1 13 8-11-4-27 0z" fill="#e9e1d1" />
      <path d="M60 14.500l4-1M68 13.500h4M63 24h5M65 15v5" stroke="#85755f" strokeWidth="1.100" />
      <path d="M51 48q5-6 11 0v5H51zM88 45q9-7 14 0 0 8-10 8z" fill="#e3d9c8" />
      <path d="M70 35l3 3-2 2zM75 34l3 3-2 2z" fill="#60523f" />
    </Svg>
  );
}

function TaskApp({ bar, active, className = "", children }: { bar?: "full" | "split"; active?: boolean; className?: string; children: ReactNode }) {
  return (
    <div className={(active ? "bg-[#4a4a4a] " : "") + "relative flex h-[60px] w-[58px] shrink-0 items-center justify-center " + className}>
      {children}
      {bar && (
        <div className={(active ? "inset-x-0" : "inset-x-[7px]") + " absolute bottom-0 flex h-[3px] bg-[#fcc68d]"}>
          {bar === "split" && <div className="ml-auto w-[13px] border-l border-[#5a4a38] bg-[#c69e75]" />}
        </div>
      )}
      {active && <div className="absolute inset-y-0 right-0 w-[6px] border-l border-[#222] bg-[#3c3c3c]" />}
      {active && <div className="absolute bottom-0 right-0 h-[3px] w-[5px] bg-[#c69e75]" />}
    </div>
  );
}

function Taskbar() {
  return (
    <div className="flex h-[60px] shrink-0 items-center bg-[#1c1c1c] text-white">
      <Svg w={24} h={24} className="ml-6">
        <path d="M0 3.500L10.500 2v9.300H0zM11.700 1.800L24 0v11.300H11.700zM0 12.500h10.500v9.400L0 20.300zM11.700 12.500H24V24l-12.300-1.900z" fill="#fff" />
      </Svg>
      <div className="ml-6 flex h-[60px] w-[432px] shrink-0 items-center border-2 border-b-0 border-[#5c5c5c] bg-[#323232]">
        <Svg w={25} h={25} className="-mt-1 ml-4">
          <circle cx="16.500" cy="8.500" r="7.700" stroke="#fff" strokeWidth="1.600" />
          <path d="M11 14.500L.8 24.500" stroke="#fff" strokeWidth="1.600" />
        </Svg>
        <T w={197} className="ml-[17px] text-[20.500px] text-[#dadada]">Type here to search</T>
        <div className="ml-[58px]">
          <SculptureArt />
        </div>
      </div>
      <Svg w={24} h={25} className="-mt-1 ml-6">
        <path d="M.7 0v3.500h14.800V0M.7 7.200h14.800v10.600H.7zM.7 25v-4h14.800v4M22 0v5M22 13v12" stroke="#fff" strokeWidth="1.400" />
        <path d="M20.500 7h3v4h-3z" fill="#fff" />
      </Svg>
      <div className="ml-7 flex">
        <TaskApp bar="full">
          <Svg w={32} h={27}>
            <path d="M0 0h11l3 3h18v23q0 1-1 1H1q-1 0-1-1z" fill="#fbd466" />
            <path d="M0 0h12l2 2.500-2 2.500H0z" fill="#d9930d" />
            <path d="M5 17q0-3 3-3h16q3 0 3 3v10h-6v-7H11v7H5z" fill="#3f92d6" />
          </Svg>
        </TaskApp>
        <TaskApp bar="full" active className="ml-0.5">
          <Svg w={36} h={36} vb="0 0 36 36" className="mr-2">
            <circle cx="18" cy="18" r="17.500" fill="#fcc31e" />
            <path d="M18 18L2.800 9.300A17.500 17.500 0 0 1 33.200 9.300H18z" fill="#e33b2e" />
            <path d="M2.800 9.300A17.500 17.500 0 0 0 17.500 35.500L26 22 18 18z" fill="#229a48" />
            <path d="M2.800 9.300L10.500 22 18 9.300z" fill="#e33b2e" />
            <path d="M33.200 9.300H18l7.800 13-8.300 13.200A17.500 17.500 0 0 0 33.200 9.300z" fill="#fcc31e" />
            <circle cx="18" cy="18" r="8.700" fill="#fff" />
            <circle cx="18" cy="18" r="6.800" fill="#3c7ded" />
          </Svg>
        </TaskApp>
        <TaskApp>
          <Svg w={34} h={35}>
            <path d="M17 0a17 17.500 0 1 0 0 35 17 17.500 0 0 0 0-35zm0 4q7 2 7 13.500T17 31q-8-2-8-13.500T17 4z" fill="#e9182b" fillRule="evenodd" />
            <path d="M17 0a17 17.500 0 0 1 0 35q-4 0-7-3 4 2 8-1 6-4 6-13.500T18 4q-4-3-8-1 3-3 7-3z" fill="#f04a54" />
          </Svg>
        </TaskApp>
        <TaskApp bar="full">
          <Svg w={36} h={32}>
            <circle cx="20" cy="16" r="16" fill="#e9603a" />
            <path d="M20 0a16 16 0 0 1 16 16H20z" fill="#ff9a78" />
            <path d="M4 16h32a16 16 0 0 1-32 0z" fill="#d35230" />
            <path d="M4 16A16 16 0 0 1 20 0v16z" fill="#ed6c47" />
            <rect y="7" width="18" height="18" rx="1.500" fill="#c43e1c" />
            <text x="9" y="21.500" textAnchor="middle" fontSize="15" fontWeight="700" fill="#fff">P</text>
          </Svg>
        </TaskApp>
        <TaskApp bar="split">
          <Svg w={35} h={32}>
            <path d="M8 0h27v8H8z" fill="#33c481" />
            <path d="M8 0h13v16H8z" fill="#21a366" />
            <path d="M8 16h13v16H8z" fill="#185c37" />
            <path d="M21 8h14v8H21z" fill="#21a366" />
            <path d="M21 16h14v8H21z" fill="#107c41" />
            <path d="M21 24h14v8H21z" fill="#185c37" />
            <rect y="7" width="18" height="18" rx="1.500" fill="#107c41" />
            <text x="9" y="21.500" textAnchor="middle" fontSize="15" fontWeight="700" fill="#fff">X</text>
          </Svg>
        </TaskApp>
        <TaskApp bar="full">
          <Svg w={36} h={32} className="-mt-1">
            <defs>
              <linearGradient id="wb" x1="0" y1="0" x2="1" y2="1">
                <stop offset="0.300" stopColor="#103cf0" />
                <stop offset="1" stopColor="#35c0ea" />
              </linearGradient>
            </defs>
            <rect y="5" width="36" height="27" rx="2" fill="url(#wb)" />
            <path d="M4 13q6-4 7 2 1 7 6 1 3-3 6 1" stroke="#fff" strokeWidth="2.600" />
            <path d="M31 0l3 1-7 14-4 3v-5z" fill="#3a3a3a" />
            <path d="M23 13l4 2-4 3z" fill="#ddd" />
          </Svg>
        </TaskApp>
        <TaskApp bar="full">
          <Svg w={36} h={36}>
            <path d="M18.500 0A17 17.500 0 0 0 3.500 26L0 36l10-3A17.500 17.500 0 1 0 18.500 0z" fill="#fff" />
            <path d="M18.500 3A14.500 14.500 0 0 0 6.500 25.500L4.500 31.500l6.200-1.700A14.500 14.500 0 1 0 18.500 3z" fill="#43c354" />
            <path d="M11.500 11q2-3 4 0l1 3-2 2.500q2 4 6.500 5.500l2-2.500 4.500 2q0 4-5 5-10-2-12.500-12z" fill="#fff" />
          </Svg>
        </TaskApp>
        <TaskApp bar="full">
          <Svg w={28} h={36}>
            <rect x="15" width="13" height="36" rx="1.500" fill="#d9a010" />
            <rect x="7.500" y="9" width="13" height="27" rx="1.500" fill="#efc331" />
            <rect y="18" width="13" height="18" rx="1.500" fill="#fbe067" />
          </Svg>
        </TaskApp>
        <TaskApp bar="full">
          <Svg w={32} h={36}>
            <path d="M0 0h10v6H0z" fill="#8cbcf8" />
            <path d="M10 7h9v6h-9z" fill="#5c9aec" />
            <path d="M0 14h10v6H0z" fill="#0e5cae" />
            <path d="M0 27h32v9H0zM20 13h12v14H10v-6h10z" fill="#c8c8cc" />
            <path d="M21.500 14.500h9v5.500h-9zM11.500 22h8v4.500h-8z" fill="#fff" />
            <path d="M21.500 21.500h9v5h-9z" fill="#5c9aec" />
            <path d="M1.500 28.500h8v6h-8zM11.500 28.500h8v6h-8zM21.500 28.500h9v6h-9z" fill="#0e5cae" />
          </Svg>
        </TaskApp>
        <TaskApp bar="full">
          <Svg w={36} h={36}>
            <path d="M27 0v10L5 27.500 0 25v-3z" fill="#0f6fb5" />
            <path d="M27 36V26L5 8.500 0 11v3z" fill="#1b87cf" />
            <path d="M27 0l9 4v28l-9 4z" fill="#30a6f0" />
          </Svg>
        </TaskApp>
        <TaskApp bar="split">
          <Svg w={33} h={33}>
            <path d="M9 3L29 4l3 24-8 5-20-5z" fill="#c9b79a" />
            <path d="M9 2l20 2-3 28L0 27z" fill="#7db9c4" />
            <path d="M9 2l20 2-1 6L6 15z" fill="#c5dfe3" />
            <path d="M5 17l21-6-2 18L0 27z" fill="#3f8d9a" />
            <path d="M10 2.500h18" stroke="#eee" strokeWidth="2.500" strokeDasharray="1.500 1" />
          </Svg>
        </TaskApp>
      </div>
      <div className="ml-[6px] flex h-[60px] w-[26px] shrink-0 flex-col items-center justify-between bg-[#efefef] pb-2 pt-[10px]">
        <Svg w={12} h={9}>
          <path d="M1 8l5-6 5 6" stroke="#5b5b5b" strokeWidth="2.600" />
        </Svg>
        <Svg w={12} h={9}>
          <path d="M1 1l5 6 5-6" stroke="#5b5b5b" strokeWidth="2.600" />
        </Svg>
      </div>
      <Svg w={36} h={31} className="-mt-2 ml-[34px]">
        <defs>
          <linearGradient id="sun" x1="0" y1="0" x2="0" y2="1">
            <stop offset="0" stopColor="#fcc21b" />
            <stop offset="1" stopColor="#e7700d" />
          </linearGradient>
        </defs>
        <circle cx="18.500" cy="15.500" r="15.500" fill="url(#sun)" />
        <path d="M7 6h7M17 6h8M7 12h29M1 18h18M22 18h7M0 24.500h30" stroke="#ffe9b0" strokeWidth="2.600" />
        <circle cx="32" cy="4.500" r="4.500" fill="#c9281c" />
      </Svg>
      <T w={43} className="ml-[13px] mt-0.5 text-[19px]">34°C</T>
      <Svg w={19} h={10} className="ml-[38px]">
        <path d="M.7 9.500l8.800-8.800 8.800 8.800" stroke="#fff" strokeWidth="1.300" />
      </Svg>
      <Svg w={17} h={23} className="ml-[19px]">
        <path d="M.7 6h10v11.500H.7zM11 10.500L16 8v8l-5-2.500M2 3Q8-1 14 3M2 20.500q6 4 12 0" stroke="#fff" strokeWidth="1.300" />
      </Svg>
      <Svg w={25} h={16} className="ml-[15px]">
        <path d="M5 12a5 5 0 0 1 1-9Q13-4 19 5v7z" fill="#8c8c8c" />
        <path d="M0 11Q2 5 8 7q5-5 10 0 7 0 7 5 0 4-4 4H4q-4-1-4-5z" fill="#fff" />
      </Svg>
      <Svg w={23} h={13} className="ml-3">
        <path d="M.7.700h20v11.600H.7zM21 4.500h1.500v4H21" stroke="#fff" strokeWidth="1.300" />
        <path d="M2 2h6v9H2z" fill="#fff" />
      </Svg>
      <Svg w={22} h={20} className="ml-[13px]">
        <path d="M.7 7H4l5-5.500v17L4 13H.7z" stroke="#fff" strokeWidth="1.300" />
        <path d="M12 7.500q1.500 2.500 0 5M15 5q3 5 0 10" stroke="#fff" strokeWidth="1.300" />
        <path d="M18.500 2q4.500 8 0 16" stroke="#888" strokeWidth="1.200" />
      </Svg>
      <Svg w={18} h={19} className="ml-[18px]">
        <path d="M.7 18Q1 2 17.500 1M5 18Q5.500 7 17.500 6M9.500 18q.5-7 8-7.500" stroke="#fff" strokeWidth="1.300" />
        <circle cx="15.500" cy="16.500" r="2" fill="#fff" />
      </Svg>
      <Svg w={21} h={21} className="ml-[21px]">
        <path d="M7 14L14 1.500Q17-.5 18 3L11 16l-5 4zM7 9Q1 8 .8 13q.2 6 5 6 5-1 7-6 3 3 7.500-1" stroke="#fff" strokeWidth="1.300" />
      </Svg>
      <T w={34} className="ml-[23px] text-[17px]">ENG</T>
      <div className="ml-5 flex flex-col items-center text-[17px] leading-[27px]">
        <T w={43}>14:00</T>
        <T w={94}>06-03-2023</T>
      </div>
      <Svg w={25} h={25} className="ml-7">
        <path d="M.7.700h23v18H15.500L11.500 23.500 8 18.700H.7z" stroke="#fff" strokeWidth="1.300" />
      </Svg>
      <div className="ml-[29px] h-[60px] w-[2px] bg-[#6b6b6b]" />
    </div>
  );
}

export default function App() {
  return (
    <div className="flex h-[1080px] w-[1920px] flex-col overflow-hidden bg-white font-['Open_Sans','Noto_Sans',sans-serif]">
      <TabStrip />
      <div className="h-[104px] shrink-0 border-b-2 border-[#8d6fb0] bg-[#6d409f]">
        <AddressBar />
        <Bookmarks />
      </div>
      <FactoryBar />
      <DocTabs />
      <FlowToolbar />
      <Canvas />
      <Panel />
      <Taskbar />
    </div>
  );
}
